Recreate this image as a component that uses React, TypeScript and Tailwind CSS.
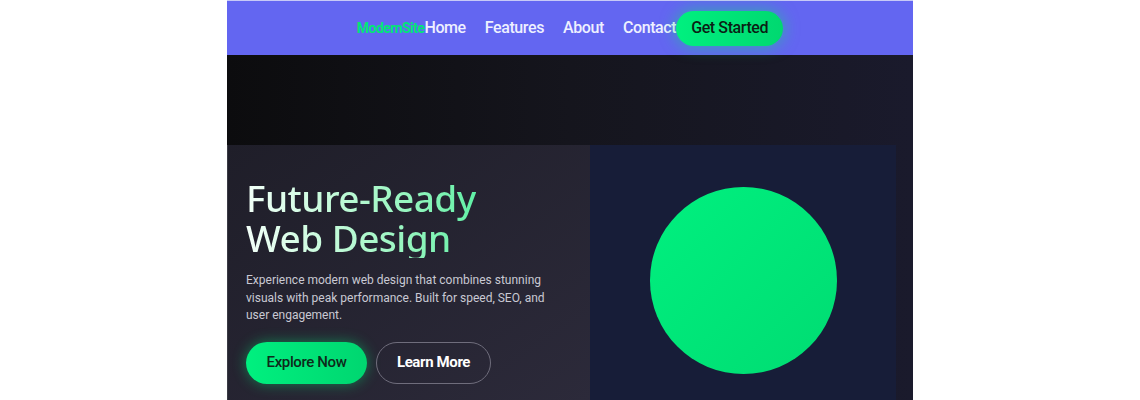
import React from 'react';

const navLinks = ['Home', 'Features', 'About', 'Contact'];

function NavBar() {
  return (
    <nav className="h-[55px] bg-[#6366f1] border-t border-[#c7c9f7] flex items-center justify-center">
      <div className="flex items-center font-['Roboto',sans-serif] text-[16px] font-medium tracking-tight">
        <span className="text-[#00e676] font-bold text-[14px] tracking-[-0.04em]">ModernSite</span>
        <div className="flex items-center gap-[19px]">
          {navLinks.map((link) => (
            <a key={link} href="#" className="text-[#eef0ff]">{link}</a>
          ))}
        </div>
        <button className="h-[35px] px-[15px] rounded-full bg-gradient-to-r from-[#00f07f] to-[#00d870] text-[#0b1f14] shadow-[0_0_16px_rgba(0,230,118,0.55)]">
          Get Started
        </button>
      </div>
    </nav>
  );
}

function Hero() {
  return (
    <section className="bg-gradient-to-r from-[#0c0c0e] via-[#15151d] to-[#1a1a2c] pt-[90px] pr-[17px]">
      <div className="grid grid-cols-[363px_306px] h-[255px]">
        <div className="bg-gradient-to-br from-[#1f1e29] to-[#2c2a3a] border-l border-[#3a3a44] pl-[18px] pt-[33px]">
          <h1 className="font-['Noto_Sans',sans-serif] font-medium text-[37px] leading-[40px] tracking-[-0.015em] bg-gradient-to-r from-[#f2fff8] to-[#5ff0a6] bg-clip-text text-transparent w-fit">
            Future-Ready<br />Web Design
          </h1>
          <p className="mt-[14px] font-['Roboto',sans-serif] text-[12px] leading-[17.5px] text-[#c9c9d3] w-[300px]">
            Experience modern web design that combines stunning visuals with peak performance. Built for speed, SEO, and user engagement.
          </p>
          <div className="mt-[17px] flex gap-[9px] font-['Roboto',sans-serif] text-[15px] tracking-tight">
            <button className="h-[42px] w-[121px] rounded-full bg-gradient-to-r from-[#00f07f] to-[#00d670] text-[#0e2a1a] font-medium shadow-[0_0_14px_rgba(0,230,118,0.45)]">
              Explore Now
            </button>
            <button className="h-[42px] w-[115px] rounded-full border border-[#6f6d7c] text-white font-bold">
              Learn More
            </button>
          </div>
        </div>
        <div className="bg-[#171d38] flex justify-center pt-[42px]">
          <div className="w-[187px] h-[187px] rounded-full bg-gradient-to-br from-[#00f07f] to-[#00dc72]" />
        </div>
      </div>
    </section>
  );
}

export default function App() {
  return (
    <div className="w-full h-[400px] bg-white flex justify-center overflow-hidden">
      <div className="w-[686px]">
        <NavBar />
        <Hero />
      </div>
    </div>
  );
}
